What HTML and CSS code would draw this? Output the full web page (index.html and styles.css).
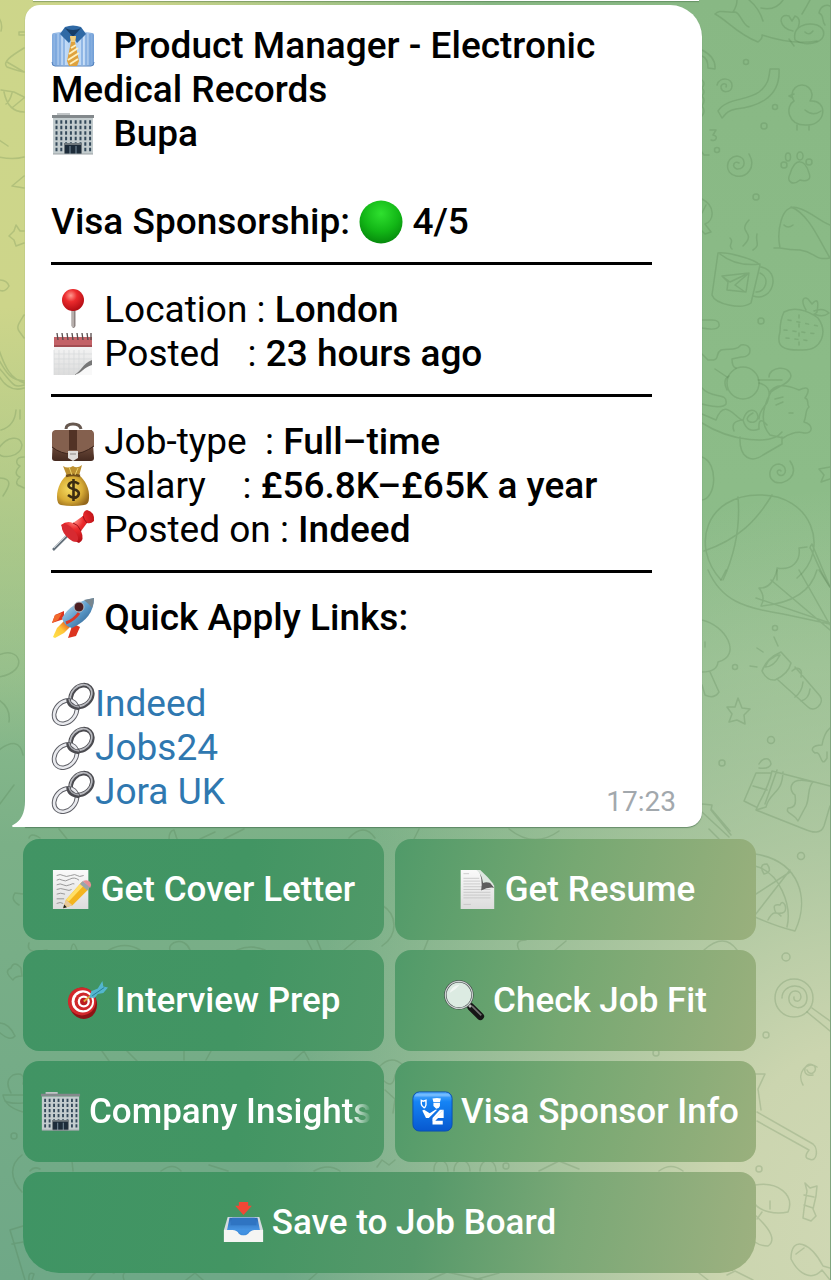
FILE: index.html
```html
<!DOCTYPE html>
<html lang="en">
<head>
<meta charset="utf-8">
<meta name="viewport" content="width=device-width, initial-scale=1">
<title>Job alert chat</title>
<link rel="stylesheet" href="styles.css">
</head>
<body>
<svg class="defs" width="0" height="0" aria-hidden="true">
  <defs>
    <linearGradient id="shirtG"><stop offset="0" stop-color="#7fa9dd"/><stop offset=".3" stop-color="#c5dcf6"/><stop offset=".5" stop-color="#a9cbf0"/><stop offset=".75" stop-color="#c9dff7"/><stop offset="1" stop-color="#6f9dd6"/></linearGradient>
    <radialGradient id="greenG" cx=".5" cy=".3" r=".7"><stop offset="0" stop-color="#2fe02f"/><stop offset=".6" stop-color="#12b616"/><stop offset="1" stop-color="#068a0c"/></radialGradient>
    <radialGradient id="redG" cx=".4" cy=".3" r=".7"><stop offset="0" stop-color="#ff9a90"/><stop offset=".4" stop-color="#ec2b2d"/><stop offset="1" stop-color="#b30d14"/></radialGradient>
    <linearGradient id="brownG" x2="0" y2="1"><stop offset="0" stop-color="#91705d"/><stop offset=".5" stop-color="#6d4a3a"/><stop offset="1" stop-color="#452a20"/></linearGradient>
    <radialGradient id="goldG" cx=".4" cy=".45" r=".65"><stop offset="0" stop-color="#f6dc62"/><stop offset=".6" stop-color="#d8ac35"/><stop offset="1" stop-color="#94671a"/></radialGradient>
    <linearGradient id="rocketG" x2="1" y2="1"><stop offset="0" stop-color="#dce9f2"/><stop offset=".5" stop-color="#5f9fce"/><stop offset="1" stop-color="#214e7c"/></linearGradient>
    <linearGradient id="flameG" x1="1" x2="0" y2="1"><stop offset="0" stop-color="#e13a16"/><stop offset=".5" stop-color="#ffc63a"/><stop offset="1" stop-color="#ffe34a"/></linearGradient>
    <linearGradient id="paperG" x2="0" y2="1"><stop offset="0" stop-color="#fafafa"/><stop offset="1" stop-color="#dcdcdc"/></linearGradient>
    <linearGradient id="blueG" x2="0" y2="1"><stop offset="0" stop-color="#5db2ff"/><stop offset=".25" stop-color="#1584f5"/><stop offset="1" stop-color="#0758cf"/></linearGradient>
    <linearGradient id="trayG" x2="0" y2="1"><stop offset="0" stop-color="#2a69b4"/><stop offset="1" stop-color="#4b9bea"/></linearGradient>
  </defs>

  <symbol id="i-shirt" viewBox="0 0 44 44">
    <path d="M3 9q-2 0-2 2v29q0 2 2 2h38q2 0 2-2V11q0-2-2-2L30 7H14z" fill="url(#shirtG)"/>
    <path d="M5 10v31M9 9v32M13 12v29M31 12v29M35 9v32M39 10v31" stroke="#6f9fdb" stroke-width="1.200"/>
    <path d="M1 38q0 4 3 4h36q3 0 3-4" fill="none" stroke="#5482bd" stroke-width="1"/>
    <path d="M14 3q8-3 16 0l5 7-9 9-4-6-4 6-9-9z" fill="#2f69a5"/>
    <path d="M14 4q8 4 16 0l-8 9z" fill="#173e68"/>
    <path d="M19 12h6l-1 6 4 19-2 5h-8l-2-5 4-19z" fill="#dfa23d"/>
    <path d="M20 24l5-3M18 30l9-6M17 36l11-7M19 40l8-5" stroke="#fff0bd" stroke-width="2"/>
    <path d="M19 12h6l-1 6h-4z" fill="#f1cf7f"/>
  </symbol>
  <symbol id="i-building" viewBox="0 0 44 44">
    <path d="M6 1h13v3H6z" fill="#c1c5c7"/>
    <path d="M1 3h42v3H1z" fill="#83898c"/>
    <path d="M2 6h40v36H2z" fill="#c3ccce"/>
    <path d="M4.500 10h36M4.500 15.500h36M4.500 21h36M4.500 26.500h36M4.500 32h36M4.500 37.500h36" stroke="#34495a" stroke-width="3.400" stroke-dasharray="2 2.800"/>
    <path d="M13 31h18v11H13z" fill="#6e777c"/>
    <path d="M14 33h16v9H14z" fill="#1d2c3a"/>
    <path d="M19 34v8M25 34v8" stroke="#7e92a1"/>
    <path d="M2 42h40" stroke="#9ba2a5" stroke-width="1"/>
  </symbol>
  <symbol id="i-chain" viewBox="0 0 44 44">
    <g fill="none">
      <ellipse cx="30.500" cy="14" rx="9.500" ry="12" transform="rotate(45 30.500 14)" stroke="#4b4b50" stroke-width="4.600"/>
      <ellipse cx="30" cy="13.500" rx="9.500" ry="12" transform="rotate(45 30 13.500)" stroke="#b9babf" stroke-width="1.800"/>
      <ellipse cx="14.500" cy="30" rx="10" ry="13" transform="rotate(42 14.500 30)" stroke="#5e5f66" stroke-width="4.600"/>
      <ellipse cx="14.500" cy="30" rx="10" ry="13" transform="rotate(42 14.500 30)" stroke="#e9eaee" stroke-width="2.600"/>
      <path d="M17.500 17q0 8 11 9" stroke="#4b4b50" stroke-width="4.500"/>
      <path d="M18 17q1 7 10 8" stroke="#a5a6ac" stroke-width="1.500"/>
    </g>
  </symbol>
</svg>

<main class="chat">
  <svg class="doodles" viewBox="0 0 831 1280" preserveAspectRatio="xMaxYMin slice" aria-hidden="true">
    <g class="doodle-lines">
      <path d="M716 14c5-5 10-1 20-2 5 0 8 14 14 15M716 14c12 6 22 20 43 28 2-2 5-3 4-7 18 6 38 9 55 6M750 0q10 8 14 21M762 8q15 3 22-8M803 14q5-8 8-14M734 12q4-6 4-12"/>
      <path d="M796 40c-3-14 12-18 22-15 9 4 9 13 0 17-8 3-17 2-22-2zM806 32q4 4 8-1M794 31c-14-2-16-18-4-15l3 5 3-5c7 2 4 12 1 15M826 25c-4-5 0-9-6-12 2-9 9-8 11-7M790 39l5 7"/>
      <path d="M703 50q14 7 13 19l-7-1q0-10-6-12M771 69h9c2 30-24 38-43 40-10 2-10 5-14 9l-4-7c8-13 29-10 41-19 10-8 10-15 11-23zM703 80q4 3 0 8 4 4 0 8 4 4 0 10 4 5 0 10"/>
      <path d="M718 85c3-9 16-7 15 1 0 7-12 8-11 0 2-4 7-2 5 1"/>
      <circle cx="747" cy="62" r="2.500"/><circle cx="776" cy="107" r="2.500"/><circle cx="765" cy="126" r="3"/><circle cx="718" cy="150" r="2.500"/><circle cx="757" cy="197" r="3"/><circle cx="762" cy="321" r="3"/>
      <path d="M795 101a10 10 0 1 1 16 0c18-2 17 24-3 24-20 1-22-19-13-24zM795 94l-5 2 4 2M806 110q8 7 16 1M798 125v5M810 125v5M711 130h6l-3 5c6 1 3 7-2 5M710 155h-5l-3-4"/>
      <path d="M750 154c8 14-3 24-13 22-12-2-11-19 1-20 10 1 9 14 0 13-6-2-3-9 2-6"/>
      <path d="M791 174c5-17 15-15 19-1 3 7-3 9-9 7-7 6-14 2-10-6z"/><ellipse cx="785" cy="165" rx="3" ry="3"/><ellipse cx="789" cy="157" rx="2.500" ry="4"/><ellipse cx="801" cy="156" rx="3" ry="4"/><ellipse cx="810" cy="162" rx="3" ry="3"/>
      <path d="M703 199c14 7 12 22 3 25l6 8-6 2-3-3M703 213l4-8M775 248h6c-3-14 0-46 18-40 12 3 24 15 32 17M792 207c18 7 28 33 39 51-16 3-14-6-30-8q-10 0-20-2M785 225q4 4 9 0"/>
      <path d="M719 253c8-1 35 5 42 12l-9 38c-10 7-36 1-39-8zM721 254q16 13 40 10M762 267c21 4 12 36-8 29M761 273c11 5 5 20-4 19M723 276l27-3-3 19-19-2 1-8zM723 276l8 6 19-9-14 12 10 7M744 246c15-15-7-12 6-26M731 238c5 4-3 7 2 11M754 250c8-5 2-8 4-16"/>
      <path d="M785 312c9-5 22-3 34 6 10 14 4 32-15 32-21 1-27-4-23-18q0-12 4-20zM807 310c-6-10-2-14 2-11l4 5q8-9 5 8l-3 3M815 311q9-4 15 2-6 5-15 1"/>
      <path stroke-dasharray="3 6" d="M789 320l30 6M785 330l34 4M787 338l26 3M800 315v30"/>
      <path d="M703 320h10q8 0 7 6-2 5-17 2M703 354l6 6c14 1 6-6 13-10 8-2 15 1 20-5 12-2 12 13 0 12l-9 2q0 8 4 9M716 369l12 8M759 380l24 0"/>
      <circle cx="744" cy="383" r="16"/><path d="M728 390q-5-10 2-14M770 377c0-10 20-13 22-1-1 8-15 11-20 16q-15 27-1 43l13 3c8-5 14-7 21-5 9 1 10-8 0-11 3-8 1-12 5-15-3-4 1-7-4-9 4-6 6-14-6-8q-24-10-30 4M777 405l7-3M776 399l8-2M790 413h4M760 383q15 4 8 20-8 9-8 16M703 388c10 12 26 3 24 16-4 6-24 0-24 0M717 420c9-24 20 0 27 0 4-13 14-12 15-3-1 10-20 4-5-4M703 423c30 19 70 22 80 9M741 437c-1 22 12 26 23 18l19-11v-7M717 420l-14-6M735 431q-4-10 9-11 4 14 16 9-1-14 8-4"/>
      <path d="M791 461c10 14-5 25-15 21-9-5-5-18 4-18 9 1 8 14 0 11-4-3 0-7 2-4M703 457c17 6 14 42 0 43M831 467l-11 2 5 6-3 7 9-3"/>
      <path d="M722 580c-31-34-15-85 38-85 53-1 72 55 38 83M739 497c3 35-5 61-15 83M773 495c-15 25-33 44-68 56M831 587c-12-18-17-36-20-39 1-5 3-2 2-4M778 580v-12c15 3 24-7 22-20l8-1M813 544l18 43"/>
      <path d="M709 570c13 30 35 38 75 44l47 10M722 580l5-10M818 570q-9 32-56 36 5-9-2-18 13 1 18-18M772 580l59 50M757 598l74 25M800 570l31 55M820 570l11 17"/>
      <path d="M703 620c23 5 41 35 16 42-1 10-12 10-16 10M711 672l9 20c-4 6-10 5-14 3l-3-10M706 642v5M775 637l4 9M758 648l6 4M751 666l7 1"/>
      <path d="M782 652c-9 4-16 10-19 19q5 10 13 9c9-4 14-9 16-17zM766 667c3-8 10-12 15-12-4 8-8 12-15 12zM770 660l5-3M779 680l30 27c6 6 17-3 12-11l-25-29M793 671c5-5 11-3 9 6M804 682q-1 10-8 15M811 689q-1 10-9 12"/>
      <path d="M739 698l4 10 8 1-6 6 1 9-8-4-8 2 3-8-5-7 8 0z"/><circle cx="776" cy="628" r="2.500"/><circle cx="736" cy="667" r="2.500"/><circle cx="772" cy="740" r="3.500"/><circle cx="723" cy="763" r="3"/><circle cx="802" cy="856" r="3.500"/>
      <path d="M831 728q-6 5-8 17c-10 0-12 5-7 8 7-3 5 17 12 5v-6M760 764c4-7 11-7 12 0-2 6-9 4-12 4M773 771l58 15M773 771c-4 19-11 26-16 39l48 19c9 4 17 5 20-3l6-20M757 773h15M757 773l-12 28 12 6M754 786l14 4M784 772c-1 23-13 19-17 35l-10 3M778 770l-12 34M814 782c-6 5-3 16-7 24l-8 15c-4-8-13-7-10-13 8 0 8-6 7-13-5-2-10-20 18-13M703 804l10 1-1 5 20 25M713 810l18 21M703 812l27 25"/>
      <path d="M756 854c45 7 55 45 40 77q-17-4-40-14M756 866c25 6 37 40 32 61M756 915l35-45M757 894l34-22M765 874q-6-10 3-10 6 8-3 10M777 913q-5-10 4-8 2-5 5 0 3 10-9 8M769 920q6-12 13-4"/><circle cx="787" cy="957" r="4"/>
      <circle cx="795" cy="998" r="19"/><path d="M783 998c0-15 25-17 25 0 0 14-20 12-18-1 2-9 12-7 12 0-1 6-8 5-7 0M808 1012l23 19M813 1008l18 13"/><circle cx="767" cy="1035" r="3"/>
      <path d="M814 1075c-12 3-10-14 0-10 7 5-3 13-6 5M804 1085c-7-12 4-25 14-18M756 1074h10l-7 15 3 21M758 1121l52 29q-6 8 0 9c9 4 9-11 4-15l-56-32M756 1185c23-4 40 10 33 27-13 3-28-1-33-8M756 1215q25 23 13 31-8 0-13-4M763 1212l-5 7M771 1209l0-8"/>
      <path d="M806 1183l5 5 7-2-1 10-3 13 3 7-5 5-8-3 1-9 3-18zM805 1195l10 2M805 1205l9 3M792 1259c0-25 20-16 32 7l7 2M792 1259c7 14 20 23 31 11l8 10M797 1254l8-6"/>
      <path d="M0 18q4 6 2 13M25 32h-5v3h5M25 48C12 56 3 62 8 67q11 4 17 5M8 62l17 10M2 90l13 2 10 5M5 92q4 20 20 20M13 93q-2 8-6 11M14 107l11-9M0 140l9 6M0 157q14 3 25 0M25 176l-12 10 12 2M10 236l5-5 2-6 4 6h4M10 236l5 4 2 6 8-3M0 280q8 0 10 6-4 7-10 4M25 315c-5 8-8 12-5 16l5 7M0 350c7 20 12 28 25 33M0 360c8 14 12 20 25 21M0 368c15 17 14 20 25 17M0 376q10 17 25 12M17 410c-1 13-8 18-15 20M21 410v9M0 448c8-12 22-13 23-3-1 12-20 14-23 9M25 457c-10 0-8 8-4 9-5 5-5 9 0 11-5 4-4 8 0 9l4 2M0 478c15 0 10 9 4 18M0 655c20-10 32 16 0 22M0 700q12 8 10 22M0 750q20-15 24 5M0 805l15-20"/>
      <path d="M30 838q2-6 11 0M60 829l8 10M170 839q0-8 5-9l3 9M216 832l-15 7M245 829l-20 10M350 838q15-16 26 0M420 829l-5 10M510 829q25 20 50 2M710 829l10 10M20 905q-9-5-4-12l8 1M30 943q-4 12 18 7M72 950q2-12 6 0M110 950q16-9 31 0M171 950c-3-8 15-14 20 0M238 950q14-6 28 0M308 940l5 10M318 940l4 10M345 950l12-10M383 905c16 10 16 30 0 41"/>
      <path d="M14 980q-10-9-2-12 3-8 10 0l1 8q-7 0-9 4M0 1023q10 0 16 13-5 6-16-4M103 1051l7 10M128 1051l10 10M185 1051v9M212 1051l-5 9M295 1060l10-9 5 9M380 1067q12-13 24-2M384 1080q10 10 12-5M386 1090l10 9-2 14M425 950l4-10M520 950q-5-10 7-10M555 951l12-10M705 950q20-18 33 0"/>
      <path d="M12 1093q-7-12 2-18 13-4 10 9M4 1095h20M4 1095q2 12 20 17M6 1101q5 3 18 2M23 1155c-13 10-12 24 0 37M31 1171q4-5 10-2M74 1171l-1-10M162 1171q12-9 20 0M210 1165l19 6M315 1171q14-8 26 0M378 1167l5-7 7 5 6-5M435 1171c-1-14 14-14 14 0M455 1171c0-14 16-14 16 0M481 1171c0-14 16-14 16 0M540 1171l20-10 20 8M660 1171q12-9 24 0"/>
      <path d="M11 1230l13-4M11 1230l15 50M13 1244l11-2M30 1280q-1-9 5-6l-2 6M90 1280q10-16 25-7M125 1280q-3-8 5-9M187 1280l9-7 8 7M310 1280l8-7M430 1280l18-8 35 8M475 1280l25-7M728 1275l8-4 18 9M700 1273l9 7"/>
      <circle cx="15" cy="1136" r="3"/><circle cx="657" cy="1053" r="3"/><circle cx="507" cy="1166" r="3"/><circle cx="760" cy="1169" r="3"/>
    </g>
  </svg>

  <div class="previous-message"></div>

  <article class="message">
    <svg class="tail" viewBox="0 0 14 34" aria-hidden="true"><path d="M14 0v34H1q-2-1 0-2Q13 26 13 8z" fill="#fff"/></svg>
    <h1 class="line strong"><svg class="emoji" role="img" aria-label="Shirt and tie"><use href="#i-shirt"/></svg>  Product Manager - Electronic Medical Records</h1>
    <p class="line strong"><svg class="emoji" role="img" aria-label="Office"><use href="#i-building"/></svg>  Bupa</p>
    <p class="line strong spaced">Visa Sponsorship: <svg class="emoji" viewBox="0 0 44 44" role="img" aria-label="Green circle"><circle cx="22" cy="22" r="21.500" fill="url(#greenG)"/></svg> 4/5</p>
    <hr class="rule">
    <p class="line"><svg class="emoji" viewBox="0 0 44 44" role="img" aria-label="Pin"><path d="M20.500 20h4v18q-2 4-4 0z" fill="#8d8482"/><path d="M22 20v19" stroke="#d2cbc8" stroke-width="1.200"/><circle cx="22" cy="12" r="11" fill="url(#redG)"/></svg> Location : <b>London</b></p>
    <p class="line"><svg class="emoji" viewBox="0 0 44 44" role="img" aria-label="Calendar"><path d="M3 7h38v36H3z" fill="url(#paperG)"/><path d="M3 18v25M8 18v25M13 18v25M18 18v25M23 18v25M28 18v22M33 18v18M3 22h38M3 27h38M3 32h34M3 37h26" stroke="#d6d8da" stroke-width=".7"/><path d="M3 5h38v10H3z" fill="#c36267"/><path d="M3 13h38v2H3z" fill="#a34d52"/><path d="M6 1l1 7M11 1l1 7M16 1l1 7M21 1l1 7M26 1l1 7M31 1l1 7M36 1l1 7M40 1v7" stroke="#574b4b" stroke-width="1.300"/><path d="M23 43c10-1 13-13 18-14v14z" fill="#f8f8f8"/><path d="M23 43c7-3 9-12 18-15v5c-8 2-10 8-18 10z" fill="#777"/></svg> Posted   : <b>23 hours ago</b></p>
    <hr class="rule">
    <p class="line"><svg class="emoji" viewBox="0 0 44 44" role="img" aria-label="Briefcase"><path d="M15 9q0-5 7-5t8 5" fill="none" stroke="#66584f" stroke-width="3"/><path d="M4 10h37l2 28q0 3-3 3H4q-3 0-3-3l1-27z" fill="url(#brownG)"/><path d="M3 11q-2 0-2 3v13q9 7 20 7t22-8V14q0-3-3-4H5z" fill="#84604e"/><path d="M1 27q9 7 20 7t22-8" fill="none" stroke="#3d241b"/><path d="M18 10h8v20h-8z" fill="#523326"/><path d="M17 31h10v7l-5 3-5-3z" fill="#dfdcd9"/><path d="M19 34h6" stroke="#8d8885"/></svg> Job-type  : <b>Full–time</b></p>
    <p class="line"><svg class="emoji" viewBox="0 0 44 44" role="img" aria-label="Money bag"><path d="M12 2q5 3 10 0 4 3 9-1l-3 11H16z" fill="#bd9030"/><path d="M16 11h12c6 5 11 14 10 23q0 7-5 7-12 2-23 0-4-1-4-8c0-10 5-18 10-22z" fill="url(#goldG)"/><path d="M15 12q7-2 14 0" stroke="#714e18" stroke-width="2.500" fill="none"/><path d="M18 3l3 8M27 4l-3 7" stroke="#ecd16a"/><path d="M28 20q-5-4-9-1-4 4 3 6 8 2 5 7-4 4-10-1M22.500 15v22" fill="none" stroke="#3c2d12" stroke-width="2.600"/></svg> Salary    : <b>£56.8K–£65K a year</b></p>
    <p class="line"><svg class="emoji" viewBox="0 0 44 44" role="img" aria-label="Pushpin"><path d="M18 26L2 42" stroke="#65717b" stroke-width="2.500"/><path d="M17 26L3 40" stroke="#c2cbd1"/><path d="M10 17q6-5 12-2l10-7q0-5 4-6 8 2 7 11-3 3-7 2l-6 8q4 9-2 12-13-4-18-18z" fill="url(#redG)"/><path d="M22 15q5 1 8 8M32 8q1 4 4 7" fill="none" stroke="#9f1018"/><ellipse cx="19" cy="25" rx="5" ry="11" transform="rotate(-42 19 25)" fill="#d72a31"/></svg> Posted on : <b>Indeed</b></p>
    <hr class="rule">
    <p class="line strong"><svg class="emoji" viewBox="0 0 44 44" role="img" aria-label="Rocket"><path d="M13 15L4 19l-3 8 12-4zM25 29l4 2-4 9-8 2 4-12z" fill="#dc3420"/><path d="M1 27l6-3 4-7-7 2z" fill="#f26a2c"/><path d="M13 25l6 6-6 6-9 5-2-1 4-9z" fill="url(#flameG)"/><path d="M11 22Q20 6 43 2q0 20-22 30-8-2-10-10z" fill="url(#rocketG)"/><path d="M33 4l10-2q0 5-2 10-4-5-8-8z" fill="#78868f"/><circle cx="28" cy="11" r="5" fill="#4c1d20" stroke="#b2bdc6"/><path d="M15 27q8-3 13-10" fill="none" stroke="#d9382a" stroke-width="3"/></svg> Quick Apply Links:</p>
    <div class="message-end">
      <ul class="links">
        <li><a class="link" href="#indeed"><svg class="emoji" aria-hidden="true"><use href="#i-chain"/></svg>Indeed</a></li>
        <li><a class="link" href="#jobs24"><svg class="emoji" aria-hidden="true"><use href="#i-chain"/></svg>Jobs24</a></li>
        <li><a class="link" href="#jora"><svg class="emoji" aria-hidden="true"><use href="#i-chain"/></svg>Jora UK</a></li>
      </ul>
      <time class="time">17:23</time>
    </div>
  </article>

  <section class="keyboard" aria-label="Job actions">
    <button class="key" type="button"><svg class="key-icon" viewBox="0 0 44 44" aria-hidden="true"><path d="M1 1h38v42H1z" fill="url(#paperG)"/><path d="M5 7q4-2 7 0t8 0 7 0 7 0M5 12q3-2 6 0t8-1 10 1M5 17q4-2 7 0t7 0 5-1M5 22q4-2 9 0t7 0M5 27q4-2 9 0M5 32h8M5 37q4-2 7 0" fill="none" stroke="#888" stroke-width=".9"/><path d="M12 42l3-9 17-19 8 7-18 18z" fill="#f3b41f"/><path d="M15 33l17-19 3 3-17 18z" fill="#ffdf66"/><path d="M12 42l3-9 7 6z" fill="#e9c89a"/><path d="M12 42l1-4 3 3z" fill="#222"/><path d="M30 16l3-3 8 6-3 4z" fill="#9aa4aa"/><path d="M33 13q5-2 8 1 2 3 0 6z" fill="#e58f94"/></svg><span class="key-label">Get Cover Letter</span></button>
    <button class="key key-right" type="button"><svg class="key-icon" viewBox="0 0 44 44" aria-hidden="true"><path d="M5 1h20l16 17v25H5z" fill="url(#paperG)"/><path d="M8 5h6M8 10h17M8 13h18M8 16h18M8 19h29M8 22h29M8 25h29M8 28h29M8 31h29M8 38h8" stroke="#c0c0c0" stroke-width=".8"/><path d="M24 1q8 8 17 19-7-1-14 3 2-13-3-22z" fill="#5d5d5d"/><path d="M22 1h4q8 7 15 16-7-4-12-2-1-9-7-14z" fill="#dce6df"/></svg><span class="key-label">Get Resume</span></button>
    <button class="key" type="button"><svg class="key-icon" viewBox="0 0 44 44" aria-hidden="true"><ellipse cx="17" cy="25" rx="15" ry="17" fill="#8e1315" transform="rotate(-18 17 25)"/><ellipse cx="16" cy="23" rx="15" ry="15" fill="#d3282b"/><circle cx="17" cy="23" r="12" fill="#fff"/><circle cx="17.500" cy="23" r="9.500" fill="#cf282b"/><circle cx="18" cy="23" r="6.500" fill="#fff"/><circle cx="18" cy="23" r="4" fill="#bb1c20"/><path d="M18 23L29 14" stroke="#e1aa3e" stroke-width="2"/><path d="M24 19l2-7 7-3 5-8 1 6 5 1-5 6-6 1-3 4z" fill="#53b6ce"/><path d="M27 17l13-9" stroke="#247b93"/></svg><span class="key-label">Interview Prep</span></button>
    <button class="key key-right" type="button"><svg class="key-icon" viewBox="0 0 44 44" aria-hidden="true"><path d="M29 29l10 10" stroke="#161616" stroke-width="8" stroke-linecap="round"/><path d="M30 28l10 10" stroke="#717171" stroke-width="1.800"/><path d="M24 24l5 5" stroke="#b7b7b7" stroke-width="3"/><circle cx="16" cy="16" r="14.500" fill="#dcebe2" stroke="#3d4444" stroke-width="2.500"/><circle cx="16" cy="16" r="14.500" fill="none" stroke="#c9cfce" stroke-width="1.400"/><path d="M6 14q2-8 11-9-4 5-11 9z" fill="#fff" opacity=".6"/></svg><span class="key-label">Check Job Fit</span></button>
    <button class="key key-fade" type="button"><svg class="key-icon" aria-hidden="true"><use href="#i-building"/></svg><span class="key-label">Company Insights</span></button>
    <button class="key key-right" type="button"><svg class="key-icon" viewBox="0 0 44 44" aria-hidden="true"><rect x="1" y="1" width="42" height="42" rx="7" fill="url(#blueG)" stroke="#0b4fb0"/><path d="M5 3h34q2 1 2 3H3q0-2 2-3z" fill="#9dd2ff" opacity=".5"/><path d="M22 8q5-1 9 0l-1 4h-7zM23 13h7v3q-1 3-4 3l-3-3z" fill="#fff"/><path d="M10 10l2 1 3-1v5q-1 3-2 3-3-2-3-4z" fill="none" stroke="#fff" stroke-width="1.500"/><path d="M11 21l2-1 6 4 6-4h2l-9 9h-3zM34 20v9h-6l-3 3h8v4H22v-5z" fill="#fff"/><path d="M22 29l8-9h4l-12 12z" fill="#fff"/></svg><span class="key-label">Visa Sponsor Info</span></button>
    <button class="key key-wide" type="button"><svg class="key-icon" viewBox="0 0 44 44" aria-hidden="true"><path d="M5 16h34l4 14v13H1V30z" fill="#d5dbe0"/><path d="M7 17h30l3 15H4z" fill="url(#trayG)"/><path d="M10 17h24l2 8H8z" fill="#2f74c2"/><path d="M5 30h34v6H5z" fill="#3f8ddc"/><path d="M1 30h9q5 0 7 4 5 4 10 0 3-4 7-4h9v13H1z" fill="#f5f5f3"/><path d="M14 30q3 1 4 3 4 3 8 0 2-2 4-3z" fill="#4292e2"/><path d="M17 0h10v4h4l-9 10-9-10h4z" fill="#f24735"/></svg><span class="key-label">Save to Job Board</span></button>
  </section>
</main>
</body>
</html>
```

FILE: styles.css
```css
* { box-sizing: border-box; }

body {
  margin: 0;
  font-family: Roboto, "Noto Sans", sans-serif;
  color: #000;
}

.defs { position: absolute; }

.chat {
  position: relative;
  min-height: 100vh;
  padding: 5px 20px 7px 23px;
  overflow: hidden;
  border-right: 1px solid #7fa57d;
  background:
    radial-gradient(ellipse 70% 58% at 104% 96%, #d0d8b4 0%, #cbd5af 25%, rgba(203, 213, 175, 0) 100%),
    radial-gradient(ellipse 60% 50% at 0% 9%, #cdd68a 0%, #cdd58a 30%, rgba(205, 213, 138, 0) 100%),
    linear-gradient(180deg, #88b884 0%, #8cbc88 38%, #8bbb8c 52%, #7bb087 66%, #6fa887 100%);
}

.doodles {
  position: absolute;
  inset: 0;
  width: 100%;
  height: 100%;
}

.doodle-lines {
  fill: none;
  stroke: #47703f;
  stroke-opacity: .2;
  stroke-width: 1.5;
  stroke-linecap: round;
  stroke-linejoin: round;
}

.previous-message {
  position: absolute;
  top: 0;
  left: 33px;
  width: 666px;
  max-width: 100%;
  height: 1px;
  background: #fff;
  box-shadow: 0 1px 1px rgba(60, 100, 60, .5);
}

.message {
  position: relative;
  max-width: 677px;
  margin: 0 0 12px 2px;
  padding: 19px 26px 13px;
  border-radius: 15px 32px 15px 0;
  background: #fff;
  box-shadow: 0 1px 1px rgba(50, 90, 60, .5);
  font-size: 37px;
  line-height: 44px;
}

.tail {
  position: absolute;
  left: -13px;
  bottom: 0;
  width: 14px;
  height: 34px;
}

.line {
  margin: 0;
  font-size: 37px;
  font-weight: 400;
  white-space: pre-wrap;
}

.strong, .line b { font-weight: 500; }

.spaced { margin-top: 44px; }

.emoji {
  width: 44px;
  height: 44px;
  vertical-align: top;
}

.rule {
  height: 3px;
  margin: 18px 24px 23px 0;
  border: 0;
  background: #000;
}

.message-end {
  display: flex;
  align-items: flex-end;
  justify-content: space-between;
  margin-top: 42px;
}

.links {
  margin: 0;
  padding: 0;
  list-style: none;
}

.link {
  color: #2f78b0;
  text-decoration: none;
}

.time {
  color: #a2a8ad;
  font-size: 28px;
  line-height: 24px;
}

.keyboard {
  position: relative;
  display: grid;
  grid-template-columns: 1fr 1fr;
  gap: 10px 11px;
  max-width: 733px;
}

.key {
  display: flex;
  align-items: center;
  justify-content: center;
  gap: 8px;
  min-width: 0;
  height: 101px;
  padding: 0 17px;
  border: 0;
  border-radius: 16px;
  overflow: hidden;
  background: linear-gradient(100deg, #419464 0%, #429563 60%, #509968 100%);
  color: #fff;
  font-family: inherit;
  font-size: 35px;
  font-weight: 500;
  white-space: nowrap;
}

.key-right { background: linear-gradient(105deg, #509a69 0%, #76a872 48%, #9ab07d 100%); }

.key-wide {
  grid-column: 1 / -1;
  border-radius: 16px 16px 36px 36px;
  background: linear-gradient(100deg, #3f9464 0%, #439563 30%, #56996a 54%, #7aa876 74%, #9eb180 100%);
}

.key-icon {
  flex: none;
  width: 41px;
  height: 41px;
}

.key-label { line-height: 44px; }

.key-fade {
  justify-content: flex-start;
  padding-right: 8px;
}

.key-fade .key-label {
  -webkit-mask-image: linear-gradient(to left, transparent 0, #000 20px);
  mask-image: linear-gradient(to left, transparent 0, #000 20px);
}
```
